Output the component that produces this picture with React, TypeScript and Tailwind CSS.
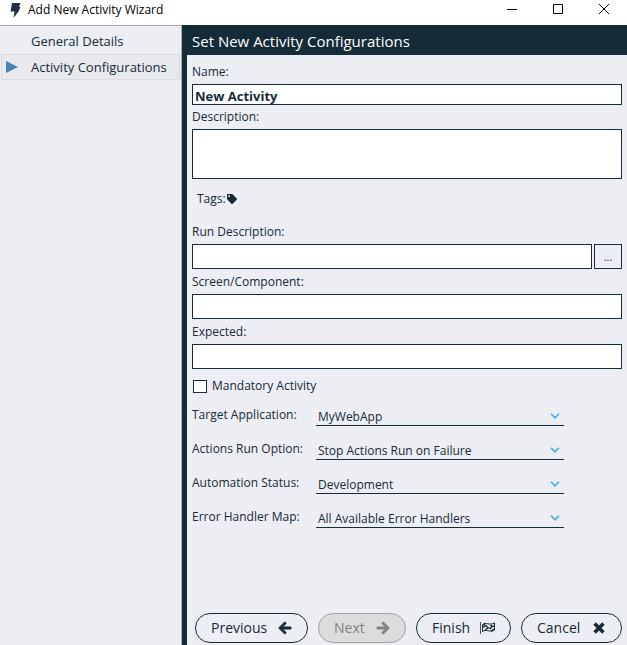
import { useState } from "react";
import type { ReactNode } from "react";
import { FaArrowLeft, FaArrowRight, FaTag } from "react-icons/fa";

const field = "block w-full border border-[#152b37] bg-white px-[2px] outline-none";

function TextField({ id, label }: { id: string; label: string }) {
  return (
    <div>
      <label htmlFor={id} className="flex h-[25px] items-center">{label}</label>
      <input id={id} type="text" className={`${field} h-[25px]`} />
    </div>
  );
}

function SelectRow({ id, label, options }: { id: string; label: string; options: string[] }) {
  return (
    <div className="flex h-[23px] items-center">
      <label htmlFor={id} className="w-[124px] shrink-0">{label}</label>
      <div className="relative h-full w-[248px]">
        <select id={id} className="block h-full w-full appearance-none border-b border-[#152b37] bg-transparent pt-[5px] pl-[2px] outline-none">
          {options.map((o) => <option key={o}>{o}</option>)}
        </select>
        <svg viewBox="0 0 10 6" className="pointer-events-none absolute top-[10px] right-[4px] h-[6px] w-[10px]" fill="none" stroke="#45a7f5" strokeWidth="1.6">
          <path d="M1 .8 5 4.8 9 .8" />
        </svg>
      </div>
    </div>
  );
}

function WizardButton({ children, disabled, width }: { children: ReactNode; disabled?: boolean; width: string }) {
  return (
    <button
      type="button"
      disabled={disabled}
      className={`flex h-[30px] items-center justify-between rounded-full border border-[#152b37] px-[15px] text-[14px] disabled:border-[#a3a3a3] disabled:bg-[#dcdcdc] disabled:text-[#838383] ${width}`}
    >
      {children}
    </button>
  );
}

export default function App() {
  const [name, setName] = useState("New Activity");
  return (
    <div className="flex min-h-screen flex-col bg-[#edeef4] font-['Open_Sans','Noto_Sans',sans-serif] text-[12px] leading-4 text-[#152b37]">
      <header className="flex h-[25px] items-center bg-white text-black">
        <svg viewBox="0 0 12 16" className="mr-[7px] mb-[6px] ml-[9px] h-4 w-3" fill="#1f3048">
          <path d="M3 1H11.500L10 5H11.500L9.500 9.500 4.500 16 5.500 9.500H1.500Z" />
        </svg>
        <h1 className="mb-[5px] flex-1 text-[12px]">Add New Activity Wizard</h1>
        <div className="mb-[7px] flex">
          <button type="button" aria-label="Minimize" className="flex w-[46px] justify-center">
            <svg viewBox="0 0 10 10" className="size-[10px]" stroke="#000"><path d="M0 5.5H10" /></svg>
          </button>
          <button type="button" aria-label="Maximize" className="flex w-[46px] justify-center">
            <svg viewBox="0 0 10 10" className="size-[10px]" fill="none" stroke="#000"><path d="M.5.5h9v9h-9Z" /></svg>
          </button>
          <button type="button" aria-label="Close" className="flex w-[46px] justify-center">
            <svg viewBox="0 0 10 10" className="size-[10px]" stroke="#000"><path d="m0 0 10 10M10 0 0 10" /></svg>
          </button>
        </div>
      </header>
      <div className="flex flex-1">
        <nav className="w-[182px] shrink-0 border-t border-r border-[#a5abb2] px-px pt-[2px] text-[13px]">
          <a href="#general" className="flex h-[26px] items-center pl-[30px]">General Details</a>
          <a href="#configurations" aria-current="step" className="flex h-[26px] items-center border border-[#d9dadd] bg-[#e8e9ed]">
            <svg viewBox="0 0 12 12" className="mr-[13px] ml-[4px] size-3" fill="#4682b4"><path d="M0 0 12 6 0 12Z" /></svg>
            Activity Configurations
          </a>
        </nav>
        <main className="flex min-w-0 flex-1 flex-col border-l-[5px] border-[#152b37]">
          <h2 className="flex h-[30px] items-center bg-[#152b37] pt-[2px] pl-[5px] text-[15px] text-white">Set New Activity Configurations</h2>
          <form className="flex flex-1 flex-col px-[5px] pt-[5px]">
            <label htmlFor="name" className="flex h-6 items-center">Name:</label>
            <input id="name" type="text" value={name} onChange={(e) => setName(e.target.value)} className={`${field} h-[21px] pt-[2px] text-[13px] font-bold`} />
            <label htmlFor="description" className="flex h-6 items-center">Description:</label>
            <textarea id="description" className={`${field} h-[50px] resize-none`} />
            <div className="flex h-10 items-center gap-px pl-[5px]">
              Tags:
              <button type="button" aria-label="Edit tags"><FaTag className="size-[10px]" /></button>
            </div>
            <div className="flex items-end gap-[2px]">
              <div className="flex-1"><TextField id="run" label="Run Description:" /></div>
              <button type="button" aria-label="Edit run description" className="h-[25px] w-7 border border-[#152b37] text-[11px]">...</button>
            </div>
            <TextField id="screen" label="Screen/Component:" />
            <TextField id="expected" label="Expected:" />
            <label className="flex h-[34px] items-center gap-[5px] pl-px">
              <input type="checkbox" className="h-[13px] w-[14px] appearance-none border border-[#152b37] bg-white checked:bg-[#152b37]" />
              Mandatory Activity
            </label>
            <div className="flex flex-col gap-[11px]">
              <SelectRow id="target" label="Target Application:" options={["MyWebApp"]} />
              <SelectRow id="option" label="Actions Run Option:" options={["Stop Actions Run on Failure", "Continue Actions Run on Failure"]} />
              <SelectRow id="status" label="Automation Status:" options={["Development", "Completed"]} />
              <SelectRow id="errors" label="Error Handler Map:" options={["All Available Error Handlers", "None"]} />
            </div>
            <div className="mt-auto mb-[2px] flex justify-end gap-[10px]">
              <WizardButton width="w-[113px]">Previous <FaArrowLeft className="size-[14px] stroke-current stroke-[35px]" /></WizardButton>
              <WizardButton width="w-[88px]" disabled>Next <FaArrowRight className="size-[14px] stroke-current stroke-[35px]" /></WizardButton>
              <WizardButton width="w-[95px]">
                Finish
                <svg viewBox="0 0 15 12" className="h-3 w-[15px]" fill="none" stroke="currentColor">
                  <path d="M.5 0V12" strokeWidth=".8" />
                  <path d="M2.500 2.500C6-.5 9 4 14.500 1V8C9 11 7 6.500 2.500 9.500Z" />
                  <path d="M3 5.500 6 3.500 7.500 5.500 10.500 6.500 12 4.500 14 4M3 3.500 5 2M5 8.500 7.500 6M10.500 3 12 4.500M11 9.500 13.500 7" strokeWidth="1.300" />
                </svg>
              </WizardButton>
              <WizardButton width="w-[101px]">
                Cancel
                <svg viewBox="0 0 12 12" className="mr-px size-3" stroke="currentColor" strokeWidth="3.600"><path d="m1.600 1.600 8.800 8.800M10.400 1.600 1.600 10.400" /></svg>
              </WizardButton>
            </div>
          </form>
        </main>
      </div>
    </div>
  );
}
